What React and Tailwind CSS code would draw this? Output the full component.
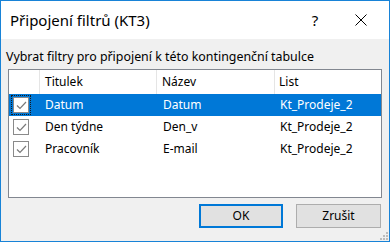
import React from 'react';

const rows = [
    { titulek: 'Datum', nazev: 'Datum', list: 'Kt_Prodeje_2', selected: true },
    { titulek: 'Den týdne', nazev: 'Den_v', list: 'Kt_Prodeje_2' },
    { titulek: 'Pracovník', nazev: 'E-mail', list: 'Kt_Prodeje_2' },
];

const Check = ({ focused }) => (
    <div className={`w-[16px] h-[16px] flex items-center justify-center ${focused ? 'outline outline-1 outline-dotted outline-[#1a1a1a] outline-offset-[1px]' : ''}`}>
        <div className="w-[16px] h-[16px] bg-white border border-[#8a8a8a] flex items-center justify-center">
            <svg width="11" height="9" viewBox="0 0 11 9" fill="none">
                <path d="M1 4.5 L4 7.5 L10 1" stroke="#7a7a7a" strokeWidth="1.2" />
            </svg>
        </div>
    </div>
);

const App = () => {
    return (
        <div className="w-[390px] h-[242px] border border-[#1883d7] bg-[#f0f0f0] flex flex-col text-[#000] font-['Noto_Sans',sans-serif]">
            {/* Title bar */}
            <div className="h-[38px] bg-white flex items-center pl-[9px]">
                <span className="text-[15px] flex-1">Připojení filtrů (KT3)</span>
                <span className="text-[15px] w-[46px] text-center">?</span>
                <div className="w-[46px] mr-[5px] flex justify-center">
                    <svg width="12" height="12" viewBox="0 0 12 12">
                        <path d="M0.5 0.5 L11.5 11.5 M11.5 0.5 L0.5 11.5" stroke="#000" strokeWidth="1" />
                    </svg>
                </div>
            </div>

            {/* Body */}
            <div className="flex-1 flex flex-col px-[7px] relative">
                <div className="text-[12.4px] mt-[9px] mb-[4px] -ml-[2px] leading-[17px]">
                    Vybrat filtry pro připojení k této kontingenční tabulce
                </div>

                <div className="h-[129px] bg-white border border-[#828790] text-[12px] flex flex-col">
                    <div className="flex h-[24px]">
                        <div className="w-[31px] border-r border-[#e5e5e5]" />
                        <div className="w-[117px] border-r border-[#e5e5e5] pl-[5px] flex items-center">Titulek</div>
                        <div className="w-[118px] border-r border-[#e5e5e5] pl-[5px] flex items-center">Název</div>
                        <div className="flex-1 pl-[4px] flex items-center">List</div>
                    </div>
                    {rows.map((r) => (
                        <div key={r.titulek} className={`flex h-[22px] items-center ${r.selected ? 'bg-[#0078d7] text-white' : ''}`}>
                            <div className="w-[31px] pl-[4px] flex items-center">
                                <Check focused={r.selected} />
                            </div>
                            <div className="w-[117px] pl-[5px]">{r.titulek}</div>
                            <div className="w-[118px] pl-[6px]">{r.nazev}</div>
                            <div className="flex-1 pl-[5px]">{r.list}</div>
                        </div>
                    ))}
                </div>

                {/* Buttons */}
                <div className="flex justify-end gap-[13px] mt-[6px] pr-[1px] text-[12px]">
                    <button className="w-[84px] h-[24px] bg-[#e1e1e1] border-2 border-[#0078d7]">OK</button>
                    <button className="w-[85px] h-[24px] bg-[#e1e1e1] border border-[#adadad]">Zrušit</button>
                </div>

                {/* Resize grip */}
                <svg className="absolute right-[1px] bottom-[1px]" width="8" height="8" viewBox="0 0 8 8">
                    <rect x="6" y="0" width="2" height="2" fill="#bcbcbc" />
                    <rect x="3" y="3" width="2" height="2" fill="#bcbcbc" />
                    <rect x="6" y="3" width="2" height="2" fill="#bcbcbc" />
                    <rect x="0" y="6" width="2" height="2" fill="#bcbcbc" />
                    <rect x="3" y="6" width="2" height="2" fill="#bcbcbc" />
                    <rect x="6" y="6" width="2" height="2" fill="#bcbcbc" />
                </svg>
            </div>
        </div>
    );
};

export default App;
